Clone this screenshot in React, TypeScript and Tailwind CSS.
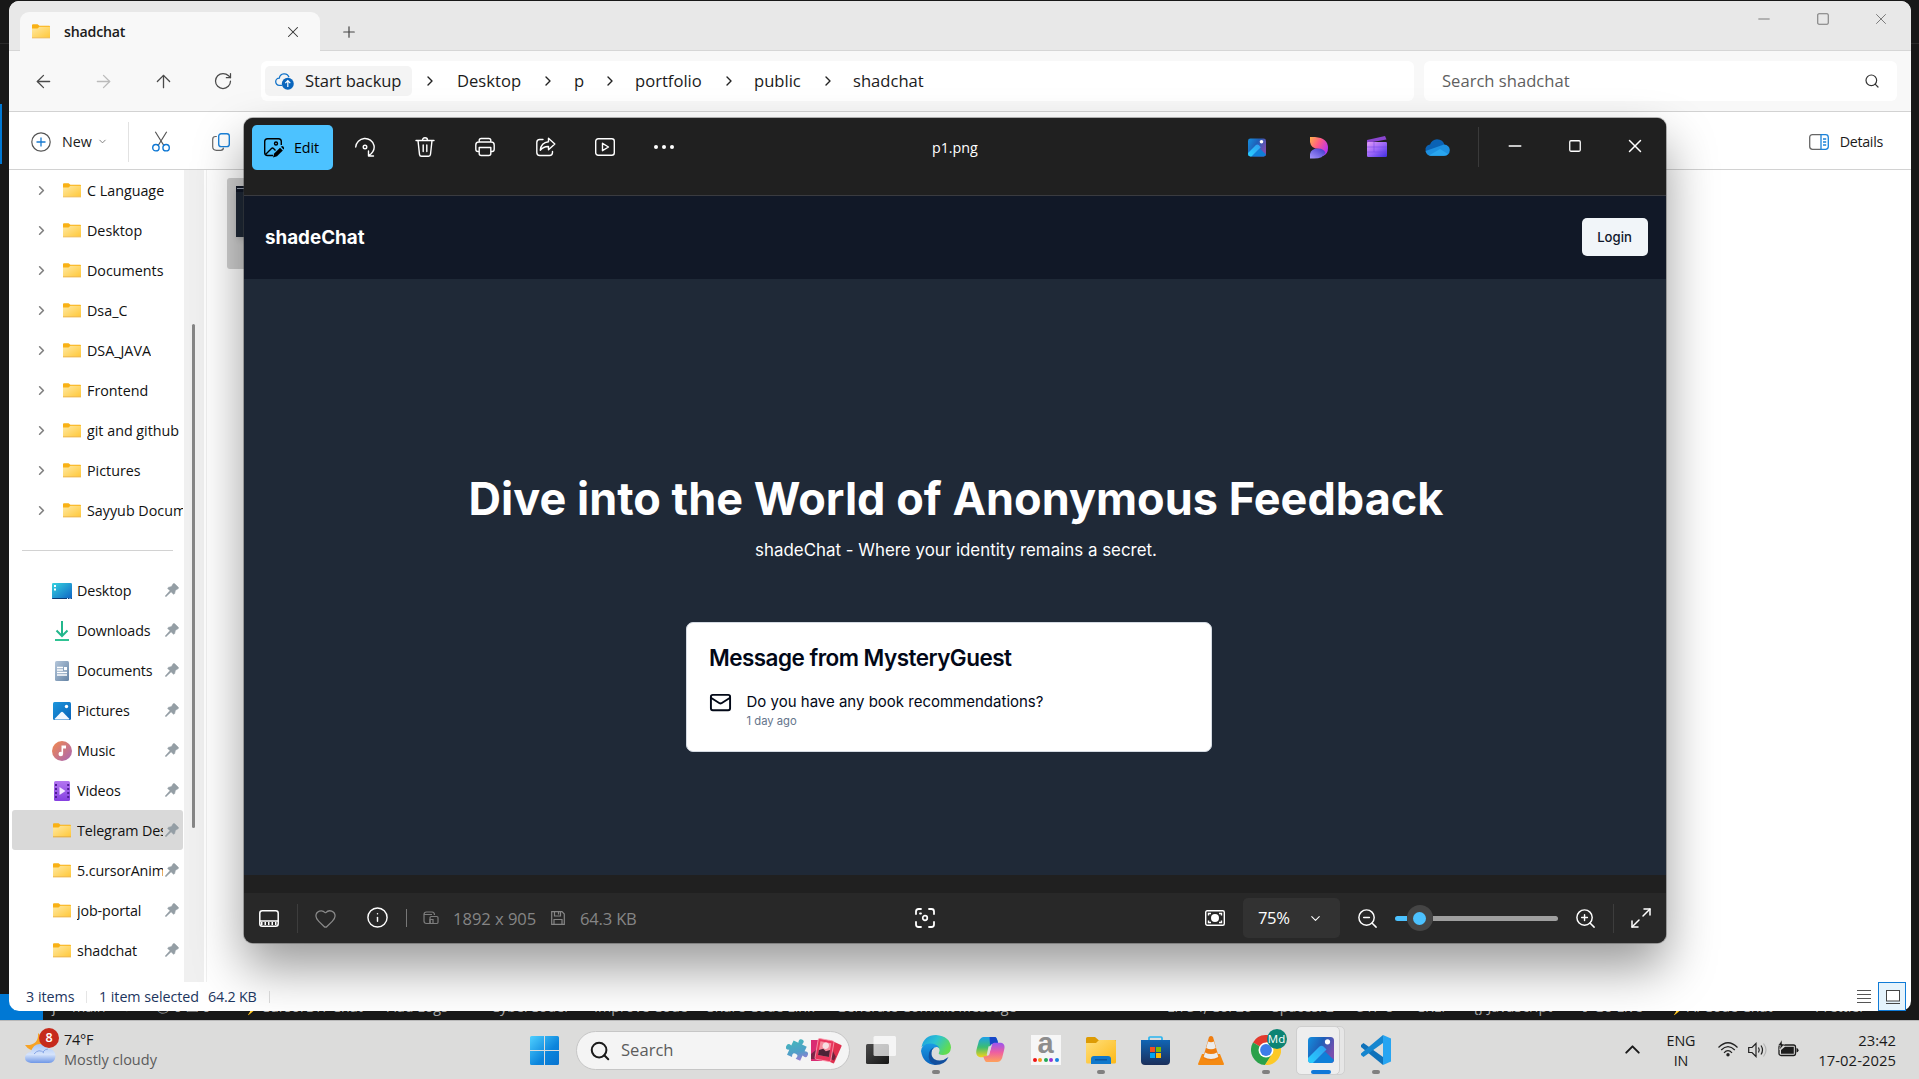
import React from "react";
import {
  ArrowLeft, ArrowRight, ArrowUp, ChevronDown, ChevronRight, ChevronUp, Heart, Info, Mail,
  Maximize2, Minus, Plus, RotateCw, Search, Square, X, ZoomIn, ZoomOut,
} from "lucide-react";

function FolderIcon({ className = "h-[15px] w-[18px]" }: { className?: string }) {
  return (
    <svg viewBox="0 0 18 15" className={className} preserveAspectRatio="none">
      <defs>
        <linearGradient id="fold" x1="0" y1="0" x2="1" y2="1">
          <stop offset="0" stopColor="#ffe9a3" />
          <stop offset="1" stopColor="#ffc83a" />
        </linearGradient>
      </defs>
      <path d="M0 1.3Q0 .3 1 .3H5.6L7.4 1.8H17.2Q18 1.8 18 2.6V6H0Z" fill="#f9b115" />
      <path d="M0 4.6H5.5L7.4 2.7H18V13.6H0Z" fill="url(#fold)" />
      <path d="M0 13.4H18V14.3H0Z" fill="#e9a31c" />
    </svg>
  );
}

function PinIcon() {
  return (
    <svg viewBox="0 0 14 14" className="h-[14px] w-[14px]" fill="#949ea5" stroke="#949ea5" strokeWidth=".6">
      <path d="M8.2.8Q8.900.100 9.700.800L13.200 4.200Q13.900 5 13.200 5.600L10.400 7.300 9.600 10.600Q9.100 11.700 8.200 10.900L6.100 8.800 1.200 13.400H.500V12.700L5 7.700 3 5.700Q2.300 4.900 3.400 4.400L6.500 3.600Z" />
    </svg>
  );
}

function DesktopIcon() {
  return (
    <svg viewBox="0 0 20 16" className="h-4 w-5">
      <defs>
        <linearGradient id="desk" x1="0" y1="0" x2="1" y2="1">
          <stop offset="0" stopColor="#36d4e0" />
          <stop offset="1" stopColor="#0f62c4" />
        </linearGradient>
      </defs>
      <rect width="20" height="16" rx="1.2" fill="url(#desk)" />
      <path d="M0 15H20V15.2Q20 16 19 16H1Q0 16 0 15.2Z" fill="#0c3a73" />
      <path d="M2 2h2v2H2zM2 5.5h2v2H2z" fill="#fff" />
      <path d="M15 15h1v1h-1zM17.500 15h1v1h-1z" fill="#cfe3ff" />
    </svg>
  );
}

function DownloadsIcon() {
  return (
    <svg viewBox="0 0 16 20" className="h-5 w-4" fill="none" stroke="#22b78c" strokeWidth="2">
      <path d="M8 0V15M2.500 9.500 8 15l5.500-5.500" />
      <path d="M1 19H15" stroke="#2fc393" />
    </svg>
  );
}

function DocumentsIcon() {
  return (
    <svg viewBox="0 0 14 20" className="h-5 w-[14px]">
      <defs>
        <linearGradient id="doc" x1="0" y1="0" x2="1" y2="1">
          <stop offset="0" stopColor="#b4c6da" />
          <stop offset="1" stopColor="#6584a5" />
        </linearGradient>
      </defs>
      <rect width="14" height="20" rx="1.500" fill="url(#doc)" />
      <path d="M2 6.500h6M2 9h6M2 11.500h10M2 14h10" stroke="#fff" strokeWidth="1.300" />
      <rect x="9" y="6" width="3" height="3.200" fill="#fff" />
    </svg>
  );
}

function PicturesIcon() {
  return (
    <svg viewBox="0 0 18 18" className="h-[18px] w-[18px]">
      <defs>
        <linearGradient id="pic" x1="0" y1="0" x2="1" y2="1">
          <stop offset="0" stopColor="#1c96dc" />
          <stop offset="1" stopColor="#0a62b8" />
        </linearGradient>
      </defs>
      <rect width="18" height="18" rx="1.500" fill="url(#pic)" />
      <circle cx="13.500" cy="4.500" r="1.700" fill="#fff" />
      <path d="M1.500 17 8 10.300Q9 9.300 10 10.300L16.500 17Q16 17.600 15 17.600H3Q2 17.600 1.500 17Z" fill="#f4f8ff" />
    </svg>
  );
}

function MusicIcon() {
  return (
    <svg viewBox="0 0 20 20" className="h-5 w-5">
      <defs>
        <linearGradient id="mus" x1="0" y1="0" x2="1" y2="1">
          <stop offset="0" stopColor="#f3894a" />
          <stop offset="1" stopColor="#a866b8" />
        </linearGradient>
      </defs>
      <circle cx="10" cy="10" r="10" fill="url(#mus)" />
      <circle cx="8.800" cy="13" r="2.300" fill="#fff" />
      <path d="M9.500 4.500V13H11.100V7.600H14V4.500Z" fill="#fff" />
    </svg>
  );
}

function VideosIcon() {
  return (
    <svg viewBox="0 0 16 20" className="h-5 w-4">
      <defs>
        <linearGradient id="vid" x1="0" y1="0" x2="0" y2="1">
          <stop offset="0" stopColor="#b376f0" />
          <stop offset="1" stopColor="#8540e0" />
        </linearGradient>
      </defs>
      <rect width="16" height="20" rx="1.500" fill="url(#vid)" />
      <path d="M2 3V18M14.200 3V18" stroke="#4f1d96" strokeWidth="2" strokeDasharray="2 2" />
      <path d="M5.500 6 11.500 10 5.500 14Z" fill="#f4e9ff" />
    </svg>
  );
}

function StartBackupIcon() {
  return (
    <svg viewBox="0 0 19 18" className="h-[18px] w-[19px]">
      <path d="M7 13.300H4.200A3.500 3.500 0 0 1 4.300 6.200 5 5 0 0 1 14 5.200" fill="none" stroke="#1474c9" strokeWidth="1.300" />
      <circle cx="12.800" cy="11.700" r="6" fill="#0b66bd" />
      <path d="M12.800 15V8.800M10.300 11.200l2.500-2.500 2.500 2.500" fill="none" stroke="#fff" strokeWidth="1.200" />
    </svg>
  );
}

function ScissorsIcon() {
  return (
    <svg viewBox="0 0 18 21" className="h-[21px] w-[18px]" fill="none">
      <path d="M3.300 .800 12 14.800M14.700 .800 6 14.800" stroke="#555" strokeWidth="1.200" />
      <circle cx="3.900" cy="16.700" r="3.200" stroke="#0f78d4" strokeWidth="1.400" />
      <circle cx="14.100" cy="16.700" r="3.200" stroke="#0f78d4" strokeWidth="1.400" />
    </svg>
  );
}

function CopyIcon() {
  return (
    <svg viewBox="0 0 18 18" className="h-[18px] w-[18px]" fill="none">
      <path d="M4.800 3.500H3.500Q.700 3.500.700 6.300V13.500Q.700 17.300 4.500 17.300H8.700Q11.300 17.300 11.500 14.600" stroke="#666" strokeWidth="1.200" />
      <rect x="6.700" y=".700" width="10.600" height="12.900" rx="2.400" stroke="#1a82da" strokeWidth="1.400" />
    </svg>
  );
}

function DetailsIcon() {
  return (
    <svg viewBox="0 0 20 16" className="h-4 w-5" fill="none">
      <path d="M12 .700H3.500Q.700.700.700 3.500V12.500Q.700 15.300 3.500 15.300H12" stroke="#666" strokeWidth="1.300" />
      <path d="M12 .700H16.500Q19.300.700 19.300 3.500V12.500Q19.300 15.300 16.500 15.300H12Z" stroke="#1a82da" strokeWidth="1.300" />
      <path d="M14 5h3.200M14 8h3.200M14 11h3.200" stroke="#1a82da" strokeWidth="1.300" />
    </svg>
  );
}

function Crumb({ children, className }: { children: React.ReactNode; className: string }) {
  return (
    <>
      <ChevronRight className="h-[16px] w-[16px] shrink-0 text-[#222]" strokeWidth={2.100} />
      <span className={className}>{children}</span>
    </>
  );
}

const treeItems = ["C Language", "Desktop", "Documents", "Dsa_C", "DSA_JAVA", "Frontend", "git and github", "Pictures", "Sayyub Documents"];

const pinned: { name: string; icon: React.ReactNode; active?: boolean }[] = [
  { name: "Desktop", icon: <DesktopIcon /> },
  { name: "Downloads", icon: <DownloadsIcon /> },
  { name: "Documents", icon: <DocumentsIcon /> },
  { name: "Pictures", icon: <PicturesIcon /> },
  { name: "Music", icon: <MusicIcon /> },
  { name: "Videos", icon: <VideosIcon /> },
  { name: "Telegram Desktop", icon: <FolderIcon />, active: true },
  { name: "5.cursorAnimation", icon: <FolderIcon /> },
  { name: "job-portal", icon: <FolderIcon /> },
  { name: "shadchat", icon: <FolderIcon /> },
];

function Explorer() {
  return (
    <div className="absolute top-px left-[9px] flex h-[1010px] w-[1902px] flex-col overflow-hidden rounded-[10px] bg-white text-[#1b1b1b]">
      <div className="flex h-[50px] shrink-0 border-b border-[#d6d6d6] bg-[#e8e8e8]">
        <div className="mt-[11px] ml-[11px] flex h-[39px] w-[300px] items-center rounded-t-[9px] bg-[#f8f8f8] pl-3">
          <FolderIcon />
          <span className="mt-px ml-[14px] text-[14.2px] font-semibold tracking-[-0.2px]">shadchat</span>
          <X className="mr-[18px] ml-auto h-[18px] w-[18px] text-[#333]" strokeWidth={1.400} />
        </div>
        <Plus className="mt-[22px] ml-[19.500px] h-[18px] w-[18px] text-[#444]" strokeWidth={1.600} />
        <div className="mt-[9px] mr-[21px] ml-auto flex gap-[40.500px] text-[#777]">
          <Minus className="h-[18px] w-[18px]" strokeWidth={1.300} />
          <Square className="h-[18px] w-[18px] p-[2px]" strokeWidth={1.800} />
          <X className="h-[18px] w-[18px]" strokeWidth={1.300} />
        </div>
      </div>
      <div className="flex h-[61px] shrink-0 items-center border-b border-[#d2d2d2] bg-[#f8f8f8] text-[16.600px]">
        <div className="flex w-[252px] items-center pl-[24px] text-[#4a4a4a]">
          <ArrowLeft className="h-[21px] w-[21px]" strokeWidth={1.500} />
          <ArrowRight className="ml-[39px] h-[21px] w-[21px] text-[#bbb]" strokeWidth={1.500} />
          <ArrowUp className="ml-[39px] h-[21px] w-[21px]" strokeWidth={1.500} />
          <RotateCw className="ml-[39px] h-[20px] w-[20px]" strokeWidth={1.500} />
        </div>
        <div className="flex h-10 w-[1153px] items-center rounded-md bg-white pl-1">
          <div className="mr-[10px] flex h-[30px] w-[147px] items-center rounded-[5px] bg-[#f4f4f4] pl-[10px]">
            <StartBackupIcon />
            <span className="ml-[11px] tracking-[-0.100px] whitespace-nowrap">Start backup</span>
          </div>
          <Crumb className="ml-[19px] w-[83px]">Desktop</Crumb>
          <Crumb className="ml-[18px] w-[28px]">p</Crumb>
          <Crumb className="ml-[17px] w-[86px]">portfolio</Crumb>
          <Crumb className="ml-[17px] w-[66px]">public</Crumb>
          <Crumb className="ml-[17px]">shadchat</Crumb>
        </div>
        <div className="ml-[10px] flex h-10 w-[473px] items-center rounded-md bg-white px-[18px] text-[#5f5f5f]">
          <span>Search shadchat</span>
          <Search className="-mr-px ml-auto h-[16px] w-[16px] text-[#333]" strokeWidth={1.800} />
        </div>
      </div>
      <div className="flex h-[58px] shrink-0 items-center border-b border-[#d2d2d2] pt-[2px] pr-[28px] pl-[22px] text-[14.300px]">
        <svg viewBox="0 0 20 20" className="h-5 w-5" fill="none">
          <circle cx="10" cy="10" r="9.200" stroke="#555" strokeWidth="1.200" />
          <path d="M10 5.500v9M5.500 10h9" stroke="#1679cf" strokeWidth="1.300" />
        </svg>
        <span className="ml-[11px] w-[30px]">New</span>
        <ChevronDown className="ml-[5px] h-[11px] w-[11px] text-[#777]" strokeWidth={2} />
        <div className="ml-[20px] h-10 w-px bg-[#e2e2e2]" />
        <div className="ml-[23px]"><ScissorsIcon /></div>
        <div className="ml-[42px]"><CopyIcon /></div>
        <div className="ml-auto flex items-center gap-[11px]">
          <DetailsIcon />
          <span className="tracking-[-0.300px]">Details</span>
        </div>
      </div>
      <div className="flex h-[812px] shrink-0">
        <div className="w-[175px] overflow-hidden text-[14.300px] whitespace-nowrap text-[#111]">
          {treeItems.map((name) => (
            <div key={name} className="flex h-10 w-[174px] items-center overflow-hidden pt-px pl-[25px]">
              <ChevronRight className="h-[15px] w-[15px] shrink-0 text-[#808080]" strokeWidth={2.600} />
              <FolderIcon className="ml-[14px] h-[15px] w-[18px] shrink-0" />
              <span className="mt-px ml-[6px] overflow-hidden">{name}</span>
            </div>
          ))}
          <div className="my-[19.500px] ml-[13px] h-px w-[151px] bg-[#d2d2d2]" />
          {pinned.map((item) => (
            <div key={item.name} className={`ml-[3px] flex h-10 w-[171px] items-center rounded-[3px] pl-[40px] ${item.active ? "bg-[#d9d9d9]" : ""}`}>
              <div className="mt-px flex w-5 shrink-0 justify-center">{item.icon}</div>
              <span className="mt-[2px] ml-[5px] w-[86px] overflow-hidden tracking-[-0.120px]">{item.name}</span>
              <div className="ml-[2px]"><PinIcon /></div>
            </div>
          ))}
        </div>
        <div className="w-5 bg-[#f0f0f0] pt-[154px] pl-2">
          <div className="h-[504px] w-[3px] rounded-full bg-[#868686]" />
        </div>
        <div className="ml-[2px] flex-1 border-l border-[#f0f0f0] pt-2 pl-[20px]">
          <div className="h-[91px] w-[120px] rounded-[3px] bg-[#d0d0d0] pt-2 pl-[9px]">
            <div className="h-[51px] bg-[#1f2937] shadow-md">
              <div className="h-[6px] bg-[#111827] pt-[2px] pl-[1px]">
                <div className="h-px w-[7px] bg-gray-400" />
              </div>
            </div>
          </div>
        </div>
      </div>
    </div>
  );
}

function ExplorerStatus() {
  return (
    <div className="absolute top-[982px] left-[9px] flex h-[29px] w-[1902px] items-center pl-[17px] text-[14.300px] whitespace-nowrap text-[#1c355e]">
      <span className="w-[60px]">3 items</span>
      <div className="h-3 w-px bg-[#e5e5e5]" />
      <span className="ml-[12px] w-[109px] tracking-[-0.050px]">1 item selected</span>
      <span className="w-[61px] tracking-[-0.200px]">64.2 KB</span>
      <div className="h-3 w-px bg-[#d5d5d5]" />
      <svg viewBox="0 0 14 14" className="mr-[7px] ml-auto h-[14px] w-[14px]" stroke="#555" strokeWidth="1">
        <path d="M0 .500h14M0 4.500h14M0 8.500h14M0 12.500h14" />
      </svg>
      <div className="mr-[5px] flex h-[29px] w-[28px] items-center justify-center border border-[#0f7bd7] bg-[#e5f3fc] pl-px">
        <svg viewBox="0 0 14 14" className="h-[14px] w-[14px]" fill="none" stroke="#444" strokeWidth="1">
          <rect x=".500" y=".500" width="13" height="10.500" fill="#fff" />
          <path d="M0 13.500h14" />
        </svg>
      </div>
    </div>
  );
}

function PhotoToolIcon({ children, className }: { children: React.ReactNode; className: string }) {
  return (
    <svg viewBox="0 0 20 20" className={className} fill="none" stroke="#fff" strokeWidth="1.400" strokeLinecap="round" strokeLinejoin="round">
      {children}
    </svg>
  );
}

function PhotosLogo({ className }: { className: string }) {
  return (
    <svg viewBox="0 0 26 26" className={className}>
      <defs>
        <linearGradient id="phb" x1="0" y1="0" x2="1" y2=".5">
          <stop offset="0" stopColor="#1490df" />
          <stop offset=".5" stopColor="#1f5fb8" />
          <stop offset="1" stopColor="#7a4fae" />
        </linearGradient>
        <linearGradient id="phm" x1="0" y1="1" x2="1" y2="0">
          <stop offset="0" stopColor="#27d0ff" />
          <stop offset="1" stopColor="#2f9df0" />
        </linearGradient>
      </defs>
      <rect width="26" height="26" rx="3.500" fill="url(#phb)" />
      <path d="M5 26 17 14.500 26 23Q25.500 26 22.500 26Z" fill="#0f7fd8" />
      <path d="M0 21 11.500 9.500Q13.500 8 15.500 9.500L18.500 12.500 5 26H3.500Q0 26 0 22.500Z" fill="url(#phm)" />
      <circle cx="19.500" cy="4.800" r="2.600" fill="#fff" />
    </svg>
  );
}

function PhotosToolbar() {
  return (
    <div className="flex h-[77px] items-start rounded-t-[9px] bg-[#202020] text-white">
      <div className="mt-[7px] ml-[8px] flex h-[45px] w-[81px] items-center rounded-[5px] bg-[#4cc2ff] pl-3 text-black">
        <svg viewBox="0 0 20 20" className="h-5 w-5" fill="none" stroke="#000" strokeWidth="1.400">
          <path d="M9 17.500H3.500Q.700 17.500.700 14.700V3.500Q.700.700 3.500.700H14.500Q17.300.700 17.300 3.500V7" />
          <path d="M1.500 16.500 7.500 10.500Q8.500 9.500 9.500 10.500L11.500 12.500" />
          <circle cx="12" cy="5.500" r="1.500" />
          <path d="M9 19.500 10.200 15.500 16 9.700 18.800 12.500 13 18.300Z" fill="#000" stroke="none" />
          <path d="M17 8.800 18 8Q20.500 8.500 20 11L19.500 11.600Z" fill="#000" stroke="none" />
        </svg>
        <span className="ml-[10px] text-[14.300px] tracking-[-0.100px]">Edit</span>
      </div>
      <PhotoToolIcon className="mt-[19px] ml-[22px] h-5 w-5">
        <path d="M.700 10A9.300 9.300 0 0 1 19 8.500C19.800 12.500 17.500 16 14 18.500M13.500 14V19H18.500" />
        <circle cx="10" cy="10" r="1.800" />
      </PhotoToolIcon>
      <PhotoToolIcon className="mt-[19px] ml-[40px] h-5 w-5">
        <path d="M1 3.500H19M7.500 3.300Q7.500.800 10 .800T12.500 3.300M3 3.500 4.500 17.300Q4.700 19.200 6.500 19.200H13.500Q15.300 19.200 15.500 17.300L17 3.500M8.200 8V14.500M11.800 8V14.500" />
      </PhotoToolIcon>
      <PhotoToolIcon className="mt-[19px] ml-[40px] h-5 w-5">
        <path d="M4 14.500H3Q.800 14.500.800 12.300V8Q.800 5 3.800 5H16.200Q19.200 5 19.200 8V12.300Q19.200 14.500 17 14.500H16M4.200 5V3.500Q4.200 1.500 6.200 1.500H13.800Q15.800 1.500 15.800 3.500V5M4.200 10.500H15.800V16.500Q15.800 18.500 13.800 18.500H6.200Q4.200 18.500 4.200 16.500Z" />
      </PhotoToolIcon>
      <PhotoToolIcon className="mt-[19px] ml-[41px] h-5 w-5">
        <path d="M7 2.500H3.800Q.800 2.500.800 5.500V15.500Q.800 18.500 3.800 18.500H13.500Q16.500 18.500 16.500 15.500V14.500" />
        <path d="M12.500 1.200 18.800 7 12.500 12.800V9.500Q7.500 9.300 4.300 13.300 5 5.500 12.500 4.700Z" />
      </PhotoToolIcon>
      <PhotoToolIcon className="mt-[19px] ml-[39px] h-5 w-5">
        <rect x=".700" y="1.700" width="18.600" height="16.600" rx="2.500" />
        <path d="M7.500 6.300 13.500 10 7.500 13.700Z" />
      </PhotoToolIcon>
      <svg viewBox="0 0 22 4" className="mt-[27px] ml-[37.500px] h-1 w-[22px]" fill="#fff">
        <circle cx="3" cy="2" r="2" /><circle cx="11" cy="2" r="2" /><circle cx="19" cy="2" r="2" />
      </svg>
      <span className="mt-[20px] ml-[257.500px] w-[48px] text-[14.300px] leading-[20px] tracking-[-0.050px]">p1.png</span>
      <PhotosLogo className="mt-[20px] ml-[268px] h-[19px] w-[18px]" />
      <svg viewBox="0 0 18 22" className="mt-[19px] ml-[44px] h-[22px] w-[18px]">
        <defs>
          <linearGradient id="dsa" x1="0" y1="0" x2="1" y2=".6">
            <stop offset="0" stopColor="#ffb14a" /><stop offset=".5" stopColor="#ff5a86" /><stop offset="1" stopColor="#b934f0" />
          </linearGradient>
          <linearGradient id="dsb" x1="0" y1="1" x2="1" y2="0">
            <stop offset="0" stopColor="#a897ff" /><stop offset="1" stopColor="#3c35c8" />
          </linearGradient>
        </defs>
        <path d="M0 0H5Q18 1 18 11 18 17 13 19L9 12Q1 12 0 5Z" fill="url(#dsa)" />
        <path d="M0 21.500V17Q1 11.500 8 11.500 14 11.500 15.500 16 13 21.500 4 21.500Z" fill="url(#dsb)" />
      </svg>
      <svg viewBox="0 0 20 21" className="mt-[18px] ml-[39px] h-[21px] w-[20px]">
        <defs>
          <linearGradient id="clp" x1="0" y1="0" x2="1" y2="1">
            <stop offset="0" stopColor="#e29bf6" /><stop offset=".5" stopColor="#9b66f7" /><stop offset="1" stopColor="#3f2ee0" />
          </linearGradient>
        </defs>
        <path d="M0 4 18 0 19.500 3.500 0 7Z" fill="#8a45cf" />
        <rect y="6" width="20" height="15" rx="1.200" fill="url(#clp)" />
        <path d="M0 11H20M0 16H20M7 6V16" stroke="#6f43e4" strokeWidth=".500" />
      </svg>
      <svg viewBox="0 0 25 17" className="mt-[21px] ml-[38px] h-[17px] w-[25px]">
        <path d="M5 15Q0 14 .500 9.500 1.500 6 5 5.500 7 .500 12 .300 18 .500 19.500 6L13 11Z" fill="#0a62b5" />
        <path d="M19 5.500Q24.500 6 24.800 11 24.500 16.800 19 16.800H6Q1.500 16.500.500 12Z" fill="#1d90e0" />
        <path d="M4 16.500 15 10 23 15Q21.500 16.800 19 16.800H6Z" fill="#29a5ee" />
      </svg>
      <div className="mt-[9px] ml-[28px] h-10 w-px bg-[#3a3a3a]" />
      <Minus className="mt-[18px] ml-[26px] h-[20px] w-[20px]" strokeWidth={1.600} />
      <Square className="mt-[20px] ml-[42px] h-[16px] w-[16px] p-px" strokeWidth={2.200} />
      <X className="mt-[17px] ml-[41px] h-[22px] w-[22px]" strokeWidth={1.600} />
    </div>
  );
}

function ShadeChatPage() {
  return (
    <div className="flex h-[680px] flex-col border-t border-[#3a3b40] bg-[#1f2937] font-[Inter,sans-serif] text-white">
      <div className="flex h-[83px] shrink-0 items-center justify-between bg-[#111827] pr-[18.500px] pb-px pl-[21px]">
        <span className="mt-[2px] text-[18.800px] font-bold">shadeChat</span>
        <div className="flex h-[38px] w-[66px] items-center justify-center rounded-[5px] bg-[#f1f5f9] pt-px text-[13.125px] font-medium text-[#0f172a]">Login</div>
      </div>
      <div className="flex flex-col items-center">
        <h1 className="mt-[192px] ml-[2px] text-[45px] leading-[56px] font-bold tracking-[0.020px] whitespace-nowrap">Dive into the World of Anonymous Feedback</h1>
        <p className="mt-[10px] ml-[2px] text-[16.875px] leading-[26px] tracking-[0.020px]">shadeChat - Where your identity remains a secret.</p>
      </div>
      <div className="mt-[59px] ml-[442px] h-[130px] w-[526px] rounded-[7px] border border-[#d4dae2] bg-white pt-[21px] pl-[22px] text-[#020817]">
        <div className="text-[22.500px] leading-[28px] font-semibold tracking-[-0.540px]">Message from MysteryGuest</div>
        <div className="mt-[19px] flex">
          <Mail className="h-[23px] w-[23px]" strokeWidth={2} />
          <div className="ml-[14.500px]">
            <div className="text-[15px] leading-[22px]">Do you have any book recommendations?</div>
            <div className="mt-px text-[11.250px] leading-[15px] text-[#64748b]">1 day ago</div>
          </div>
        </div>
      </div>
    </div>
  );
}

function PhotosFooter() {
  return (
    <div className="flex h-[50px] items-center rounded-b-[9px] bg-[#282828] text-white">
      <svg viewBox="0 0 20 17" className="ml-[15px] h-[17px] w-5" fill="none" stroke="#fff" strokeWidth="1.500">
        <rect x=".800" y=".800" width="18.400" height="15.400" rx="2.500" />
        <path d="M1 11H19" /><path d="M2 13.500H18" strokeWidth="3" strokeDasharray="1.500 2" />
      </svg>
      <div className="ml-[18px] h-[29px] w-px bg-[#3d3d3d]" />
      <Heart className="ml-[15.500px] h-[23px] w-[23px] text-[#8a8a8a]" strokeWidth={1.300} />
      <Info className="mb-px ml-[29.500px] h-[23px] w-[23px]" strokeWidth={1.500} />
      <div className="ml-[17px] h-[18px] w-px bg-[#777]" />
      <svg viewBox="0 0 16 14" className="ml-[16px] h-[14px] w-4" fill="none" stroke="#7d7d7d" strokeWidth="1.200">
        <path d="M8 12.500H3.500Q1 12.500 1 10V3.500Q1 1 3.500 1H9Q11.500 1 11.500 4M1 3.500H9" />
        <rect x="7" y="5.500" width="8" height="7" rx="1.200" /><path d="M7 13V8.500H10V13" />
      </svg>
      <span className="mt-[2px] ml-[14px] w-[98px] text-[16.600px] tracking-[-0.050px] whitespace-nowrap text-[#858585]">1892 x 905</span>
      <svg viewBox="0 0 14 14" className="h-[14px] w-[14px]" fill="none" stroke="#858585" strokeWidth="1.200">
        <path d="M.700.700H11L13.300 3V13.300H.700ZM3.500 1V5H9.500V1M3 13V8.500H11V13M7.500 1V3.500" />
      </svg>
      <span className="mt-[2px] ml-[15px] w-[100px] text-[16.600px] tracking-[-0.200px] text-[#858585]">64.3 KB</span>
      <PhotoToolIcon className="ml-[235px] h-[20px] w-[20px]">
        <path d="M1 6V3.500Q1 1 3.500 1H6M14 1H16.500Q19 1 19 3.500V6M19 14V16.500Q19 19 16.500 19H14M6 19H3.500Q1 19 1 16.500V14M5 5.500H6" strokeWidth="1.800" />
        <circle cx="10" cy="10" r="2.300" strokeWidth="1.700" />
      </PhotoToolIcon>
      <svg viewBox="0 0 20 16" className="ml-[270px] h-4 w-5" fill="none" stroke="#fff" strokeWidth="1.400">
        <rect x=".700" y=".700" width="18.600" height="14.600" rx="1.500" />
        <path d="M3.500 5.500V3.500H6M14 3.500H16.500V5.500M16.500 10.500V12.500H14M6 12.500H3.500V10.500" />
        <circle cx="10" cy="8" r="4" fill="#fff" stroke="none" />
      </svg>
      <div className="ml-[18px] flex h-10 w-[97px] items-center rounded-[5px] bg-[#323232] pl-[15px] text-[16.600px]">
        <span className="mt-px w-[47px] tracking-[-0.400px]">75%</span>
        <ChevronDown className="ml-[2.500px] h-[15px] w-[15px]" strokeWidth={1.700} />
      </div>
      <ZoomOut className="ml-[15.500px] h-[23px] w-[23px]" strokeWidth={1.500} />
      <div className="ml-[16px] flex h-[26px] w-[163px] items-center">
        <div className="h-[5px] w-[12px] rounded-l-full bg-[#4cc2ff]" />
        <div className="flex h-[26px] w-[26px] items-center justify-center rounded-full bg-[#454545]">
          <div className="h-[13px] w-[13px] rounded-full bg-[#4cc2ff]" />
        </div>
        <div className="h-[5px] flex-1 rounded-r-full bg-[#9f9f9f]" />
      </div>
      <ZoomIn className="ml-[16px] h-[23px] w-[23px]" strokeWidth={1.500} />
      <div className="ml-[16px] h-[29px] w-px bg-[#3d3d3d]" />
      <Maximize2 className="ml-[15.500px] h-[24px] w-[24px]" strokeWidth={1.500} />
    </div>
  );
}

function PhotosWindow() {
  return (
    <div className="absolute top-[118px] left-[244px] flex h-[825px] w-[1422px] flex-col rounded-[9px] bg-[#202020] shadow-[0_0_0_1px_rgba(70,70,70,0.4),0_25px_50px_rgba(0,0,0,0.4)]">
      <PhotosToolbar />
      <ShadeChatPage />
      <div className="h-[18px] bg-[#202020]" />
      <PhotosFooter />
    </div>
  );
}

function EditorBehind() {
  return (
    <div className="absolute inset-0 flex flex-col bg-[#181818]">
      <div className="flex h-[994px] flex-col justify-start pt-[43px]">
        <div className="h-px bg-[#2b2b2b]" />
        <div className="mt-[60px] h-[60px] w-[2px] bg-[#0078d4]" />
      </div>
      <div className="flex h-[26px] items-center text-[14.300px] whitespace-nowrap text-[#a9a9a9]">
        <div className="flex h-full w-[43px] items-center justify-center bg-[#0078d4] text-white">&gt;&lt;</div>
        <span className="ml-[9px] w-[20px]">ʃ</span>
        <span className="w-[50px]">main</span>
        <span className="w-[34px]">⟳</span>
        <span className="w-[88px]">ⓧ 0 ⚠ 0</span>
        <span className="w-[17px] text-orange-500">⚡</span>
        <span className="w-[126px]">CursorDIY Chat</span>
        <span className="w-[86px]">Add Logs</span>
        <span className="w-[18px] text-amber-400">●</span>
        <span className="w-[103px]">CyberCoder</span>
        <span className="w-[113px]">Improve Code</span>
        <span className="w-[129px]">Share Code Link</span>
        <span className="w-[331px]">Generate Commit Message</span>
        <span className="w-[105px]">Ln 34, Col 26</span>
        <span className="w-[83px]">Spaces: 2</span>
        <span className="w-[61px]">UTF-8</span>
        <span className="w-[57px]">CRLF</span>
        <span className="w-[107px]">{"{}"} JavaScript</span>
        <span className="w-[90px]">⏚ Go Live</span>
        <span className="w-[17px] text-orange-500">⚡</span>
        <span className="w-[128px]">AI Code Chat</span>
        <span className="w-[75px]">Prettier</span>
        <span>●</span>
      </div>
    </div>
  );
}

function TaskCell({ children, running }: { children: React.ReactNode; running?: boolean }) {
  return (
    <div className="flex h-[59px] w-[55px] shrink-0 flex-col items-center">
      <div className="mt-[13px] flex h-[32px] items-center justify-center">{children}</div>
      {running && <div className="mt-[4px] h-1 w-2 rounded-full bg-[#808080]" />}
    </div>
  );
}

function Taskbar() {
  return (
    <div className="absolute top-[1020px] left-0 flex h-[59px] w-[1919px] items-start border-t border-[#b9b9b9] bg-[#dcdcdb] text-[#1a1a1a]">
      <div className="relative mt-[12px] ml-[25px] h-8 w-[31px]">
        <svg viewBox="0 0 31 31" className="h-[31px] w-[31px]">
          <defs>
            <linearGradient id="cl" x1="0" y1="0" x2="0" y2="1">
              <stop offset="0" stopColor="#a9c6f6" /><stop offset=".55" stopColor="#d5e3fb" /><stop offset="1" stopColor="#6f97e6" />
            </linearGradient>
          </defs>
          <path d="M13 0Q14 13 0 12 4 18 12 18 20 12 18 5Z" fill="#f7a325" />
          <path d="M6 30Q0 29 0 24.500.500 19.500 6 19 8 11 15 11 20 11 22 15.500 30 15.500 30.500 23 30 30 24 30Z" fill="url(#cl)" />
          <path d="M9 21Q14 15 19 20M18 19Q20 16 23 16" stroke="#7f9fe2" strokeWidth=".900" fill="none" />
        </svg>
        <div className="absolute -top-[5px] left-[14px] flex h-5 w-5 items-center justify-center rounded-full bg-[#c62a1c] text-[12.500px] font-semibold text-white">8</div>
      </div>
      <div className="mt-[9px] ml-[8px] w-[466px] text-[14.500px] leading-[20px]">
        <div className="tracking-[-0.250px]">74°F</div>
        <div className="text-[#5b5b5b]">Mostly cloudy</div>
      </div>
      <svg viewBox="0 0 29 29" className="mt-[15px] h-[29px] w-[29px]">
        <defs>
          <linearGradient id="win" x1="0" y1="0" x2="29" y2="29" gradientUnits="userSpaceOnUse">
            <stop offset="0" stopColor="#4fd0ff" /><stop offset=".6" stopColor="#0c85dc" /><stop offset="1" stopColor="#0873cf" />
          </linearGradient>
        </defs>
        <path d="M1.500 0H14V14H0V1.500Q0 0 1.500 0ZM15 0H27.500Q29 0 29 1.500V14H15ZM0 15H14V29H1.500Q0 29 0 27.500ZM15 15H29V27.500Q29 29 27.500 29H15Z" fill="url(#win)" />
      </svg>
      <div className="mt-[10px] ml-[17px] flex h-[39px] w-[274px] items-center rounded-full border border-[#c6c6c6] bg-[#f4f4f4] pl-[12px]">
        <Search className="h-[22px] w-[22px] text-[#1a1a1a]" strokeWidth={2.200} />
        <span className="ml-[10px] text-[16.600px] text-[#5c5c5c]">Search</span>
        <svg viewBox="0 0 56 28" className="mr-[7px] ml-auto h-7 w-14">
          <defs>
            <linearGradient id="puz" x1="0" y1="0" x2="1" y2="1">
              <stop offset="0" stopColor="#3fc0b6" /><stop offset=".6" stopColor="#4f9fc8" /><stop offset="1" stopColor="#b06fd8" />
            </linearGradient>
          </defs>
          <g transform="rotate(25 11 14)">
            <path d="M3.500 6H8.800Q7 1.500 10.800 1.500T12.800 6H18V11Q22.500 9.500 22.500 13.500T18 15.800V21.500H13Q15 17 11 17T9 21.500H3.500V16.200Q-.800 18 -.800 14T3.500 11.500Z" fill="url(#puz)" />
          </g>
          <path d="M25 3H36V24H25Z" fill="#d92b72" />
          <path d="M25 17 31 12 36 18V22H25Z" fill="#7c2347" />
          <g transform="rotate(24 46 16)"><rect x="38" y="5" width="14" height="20" rx="1" fill="#e0304f" /><path d="M39 22V18L45 13 51 18V22Z" fill="#70223c" /></g>
          <g transform="rotate(10 38 13)"><rect x="30.500" y="2.500" width="16" height="21" rx="1.500" fill="#e8355c" stroke="#fb9bb0" strokeWidth=".800" /><rect x="33" y="5" width="11" height="14" fill="#f58c9d" /><path d="M33 14 37 12 40 14 44 12V19H33Z" fill="#4b2337" /><circle cx="39" cy="8.500" r="3.200" fill="#f6dfe3" /></g>
        </svg>
      </div>
      <div className="ml-[3px] flex">
        <TaskCell>
          <svg viewBox="0 0 30 28" className="h-7 w-[30px]">
            <defs>
              <linearGradient id="tv" x1="0" y1="0" x2="1" y2="1"><stop offset="0" stopColor="#4a4a4a" /><stop offset="1" stopColor="#161616" /></linearGradient>
            </defs>
            <rect y="8" width="23" height="20" rx="1.500" fill="url(#tv)" />
            <rect x="7.500" width="22.500" height="20" rx="1.500" fill="#fff" fillOpacity=".72" />
          </svg>
        </TaskCell>
        <TaskCell running>
          <svg viewBox="0 0 30 30" className="h-[30px] w-[30px]">
            <defs>
              <linearGradient id="eg1" x1="0" y1="0" x2="1" y2=".5"><stop offset="0" stopColor="#1b97e0" /><stop offset=".5" stopColor="#2cc3d2" /><stop offset="1" stopColor="#62dc4f" /></linearGradient>
              <linearGradient id="eg2" x1="0" y1="0" x2="0" y2="1"><stop offset="0" stopColor="#1a9ae4" /><stop offset="1" stopColor="#0b63bd" /></linearGradient>
            </defs>
            <path d="M.500 12Q3 0 15 0 29 1 30 12.500 29.500 20 22 20 16.500 19.800 18 17.500 20 13 15 11 8 8 .500 12Z" fill="url(#eg1)" />
            <path d="M0 16Q1 8.500 9 8.500 16 8.500 18.500 13 14 10.500 11 15 8 21 15 29L14 30Q2 29 0 16Z" fill="url(#eg2)" />
            <path d="M11 15Q9 20 13 24 20 28 27.500 22 24 30 14.500 30 6 27 8 18 9 14 13 12.500Z" fill="#124f9e" />
          </svg>
        </TaskCell>
        <TaskCell>
          <svg viewBox="0 0 30 27" className="h-[26px] w-[29px]">
            <defs>
              <linearGradient id="cp1" x1="0" y1="0" x2="0" y2="1"><stop offset="0" stopColor="#1da0ea" /><stop offset=".5" stopColor="#3bbd72" /><stop offset="1" stopColor="#f5d31a" /></linearGradient>
              <linearGradient id="cp2" x1="0" y1="0" x2="0" y2="1"><stop offset="0" stopColor="#9a55f0" /><stop offset=".5" stopColor="#ee5fa0" /><stop offset="1" stopColor="#ffa25a" /></linearGradient>
            </defs>
            <path d="M8 0H20Q22 1 23 7H18Q15 7 14 11L12 19Q11 21 9 21H4Q-1 20 .500 13L3 4Q5 0 8 0Z" fill="url(#cp1)" />
            <path d="M14 0H20Q22 1 23 7H18Q15 7 14.500 9Z" fill="#1747c8" />
            <path d="M22 26H11Q9 26 7.500 20H10Q13 20 14 16L16.500 8Q17 6 19 6H26Q31 7 29 14L27 22Q25 26 22 26Z" fill="url(#cp2)" />
            <path d="M13 9.500H16L13.500 19H11Z" fill="#dcdcdb" />
          </svg>
        </TaskCell>
        <TaskCell>
          <div className="flex h-[30px] w-[30px] flex-col items-center bg-[#f6f6f6]">
            <span className="-mt-[5px] h-[26px] font-['Liberation_Sans'] text-[29px] leading-[26px] font-bold text-[#8d8d8d]">a</span>
            <div className="mt-[2px] flex gap-[1.500px]">
              <i className="h-1 w-1 rounded-full bg-[#f01414]" /><i className="h-1 w-1 rounded-full bg-[#f59a1f]" /><i className="h-1 w-1 rounded-full bg-[#22a855]" /><i className="h-1 w-1 rounded-full bg-[#9434d8]" /><i className="h-1 w-1 rounded-full bg-[#1784e0]" />
            </div>
          </div>
        </TaskCell>
        <TaskCell running>
          <svg viewBox="0 0 30 27" className="h-[27px] w-[30px]">
            <defs>
              <linearGradient id="ex" x1="0" y1="0" x2="1" y2="1"><stop offset="0" stopColor="#ffdf7c" /><stop offset="1" stopColor="#fdb916" /></linearGradient>
            </defs>
            <path d="M0 1.500Q0 0 1.500 0H9L12.500 3H29Q30 3 30 4V9H0Z" fill="#dd9b04" />
            <path d="M0 6H10L13 3H28.500Q30 3 30 4.500V25Q30 26.500 28.500 26.500H1.500Q0 26.500 0 25Z" fill="url(#ex)" />
            <path d="M5 27V22Q5 19 8 19H22Q25 19 25 22V27Z" fill="#0f78cc" />
            <path d="M9 22.800H21" stroke="#0a4f94" strokeWidth="1.200" />
          </svg>
        </TaskCell>
        <TaskCell>
          <svg viewBox="0 0 29 29" className="h-[29px] w-[29px]">
            <defs>
              <linearGradient id="st" x1="0" y1="0" x2="0" y2="1"><stop offset="0" stopColor="#1065b4" /><stop offset="1" stopColor="#1b2f5b" /></linearGradient>
            </defs>
            <path d="M8 5V2Q8 1 9 1H20Q21 1 21 2V5" fill="none" stroke="#28b4f0" strokeWidth="1.700" />
            <path d="M0 4H29V25Q29 29 25 29H4Q0 29 0 25Z" fill="url(#st)" />
            <path d="M9 11h5v5H9z" fill="#f25022" /><path d="M15 11h5v5h-5z" fill="#7fba00" /><path d="M9 17h5v5H9z" fill="#00a4ef" /><path d="M15 17h5v5h-5z" fill="#ffb900" />
          </svg>
        </TaskCell>
        <TaskCell>
          <svg viewBox="0 0 26 29" className="h-[29px] w-[26px]">
            <path d="M4 18H22L26 28Q26 29 25 29H1Q0 29 0 28Z" fill="#f58a12" />
            <path d="M11 1Q13-1 15 1L21 22Q13 27 5 22Z" fill="#ef7d10" />
            <path d="M10 5.500Q13 7 16 5.500L17.800 12Q13 14.500 8.200 12ZM7 16.500Q13 19.500 19 16.500L20.300 21Q13 25 5.700 21Z" fill="#ececec" />
          </svg>
        </TaskCell>
        <TaskCell running>
          <div className="relative h-[30px] w-[30px]">
            <svg viewBox="0 0 30 30" className="h-[30px] w-[30px]">
              <path d="M15 15 2 7.500A15 15 0 0 1 28 7.500H15Z" fill="#e33b2e" />
              <path d="M15 15 2 7.500A15 15 0 0 0 14 30L21.500 19Z" fill="#2aa14a" />
              <path d="M15 7.500H28A15 15 0 0 1 14 30L21.500 18Z" fill="#fcc926" />
              <circle cx="15" cy="15" r="7.500" fill="#fff" /><circle cx="15" cy="15" r="5.900" fill="#3e7de8" />
            </svg>
            <div className="absolute -top-[6px] left-[16px] flex h-5 w-5 items-center justify-center rounded-full bg-[#0c8474] text-[11.500px] text-white">Md</div>
          </div>
        </TaskCell>
        <div className="mt-[5px] ml-[3px] h-[49px] w-[49px] rounded-[5px] border border-[#d0d0d0] bg-[#e6e6e6]">
          <div className="-mt-px -ml-px flex h-[49px] w-[44px] flex-col items-center rounded-[5px] border border-[#cfcfcf] bg-[#eeeeee] pt-[10px] pl-[5px]">
            <PhotosLogo className="h-[26px] w-[26px]" />
            <div className="mt-[7px] h-1 w-5 rounded-full bg-[#0f78d8]" />
          </div>
        </div>
        <div className="ml-[3px]">
          <TaskCell running>
            <svg viewBox="0 0 30 30" className="h-[30px] w-[30px]">
              <path d="M0 10 2.500 8 22 22V30L0 12Z" fill="#0f72ba" />
              <path d="M22 0V8L2.500 22 0 20Q-.500 18.800.500 18Z" fill="#1686cf" />
              <path d="M22 0 30 3.500V26.500L22 30Z" fill="#27a5f2" />
            </svg>
          </TaskCell>
        </div>
      </div>
      <ChevronUp className="mt-[16px] ml-[217px] h-[25px] w-[25px]" strokeWidth={1.900} />
      <div className="mt-[10px] ml-[15px] w-[42px] text-center text-[14.300px] leading-[20px] tracking-[-0.050px]">
        <div>ENG</div>
        <div>IN</div>
      </div>
      <svg viewBox="0 0 20 15" className="mt-[21px] ml-[16px] h-[15px] w-5" fill="none" stroke="#222" strokeWidth="1.200">
        <path d="M.500 5.500Q10-4 19.500 5.500M3.200 8Q10 1.200 16.800 8M6 10.800Q10 6.500 14 10.800" />
        <circle cx="10" cy="12.800" r="1.700" fill="#222" stroke="none" />
      </svg>
      <svg viewBox="0 0 20 16" className="mt-[21px] ml-[10px] h-4 w-5" fill="none" stroke="#222" strokeWidth="1.200">
        <path d="M.700 5.500H4L8 1.500V14.500L4 10.500H.700ZM10.500 5.500Q12 8 10.500 10.500M13 3.500Q16 8 13 12.500" />
        <path d="M15.500 1.500Q20.500 8 15.500 14.500" stroke="#b5b5b5" />
      </svg>
      <svg viewBox="0 0 21 17" className="mt-[19px] ml-[10px] h-[17px] w-[21px]">
        <rect x="1" y="5" width="16.500" height="10.500" rx="2" fill="none" stroke="#1c1c1c" strokeWidth="1.300" />
        <path d="M7 6.800H15.800V13.800H3V10Z" fill="#1c1c1c" />
        <path d="M18.500 8Q20.500 8.500 20.500 10.200T18.500 12.500Z" fill="#1c1c1c" />
        <path d="M4 0 0 5.500H2.500L1.500 10 6.500 4H4Z" fill="#1c1c1c" stroke="#dcdcdb" strokeWidth=".500" />
      </svg>
      <div className="mt-[9px] mr-[23px] ml-auto text-right text-[14.800px] leading-[20px]">
        <div>23:42</div>
        <div className="tracking-[0.050px]">17-02-2025</div>
      </div>
    </div>
  );
}

export default function App() {
  return (
    <div className="relative h-[1079px] w-[1919px] overflow-hidden bg-[#181818] font-['Open_Sans','Noto_Sans',sans-serif]">
      <EditorBehind />
      <div className="absolute inset-x-0 top-0 h-[1011px] overflow-hidden">
        <Explorer />
        <PhotosWindow />
        <ExplorerStatus />
      </div>
      <Taskbar />
    </div>
  );
}
